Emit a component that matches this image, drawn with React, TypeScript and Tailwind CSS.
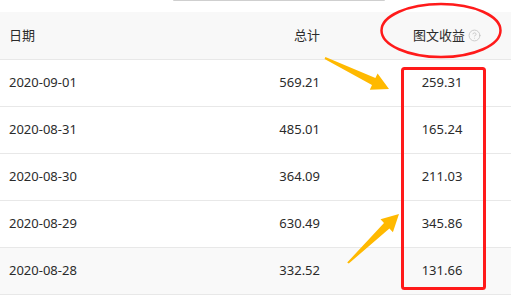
import { CircleHelp } from 'lucide-react'

const rows = [
  { date: '2020-09-01', total: '569.21', article: '259.31' },
  { date: '2020-08-31', total: '485.01', article: '165.24' },
  { date: '2020-08-30', total: '364.09', article: '211.03' },
  { date: '2020-08-29', total: '630.49', article: '345.86' },
  { date: '2020-08-28', total: '332.52', article: '131.66' },
]

const font = { fontFamily: '"Noto Sans", "Noto Sans CJK SC", sans-serif' }

function Annotations() {
  return (
    <svg className="absolute inset-0 pointer-events-none" width="511" height="303" viewBox="0 0 511 303">
      <ellipse cx="441" cy="30.5" rx="59.5" ry="26.5" fill="none" stroke="#ff1a1a" strokeWidth="2.5" />
      <rect x="402.5" y="68.5" width="82" height="220" rx="2" fill="none" stroke="#ff1a1a" strokeWidth="3" />
      <polygon
        fill="#ffb900"
        points="325.4,57.1 375.4,78.1 377.6,73.5 389,89 369.8,89.7 372,85.1 324.6,58.9"
      />
      <polygon
        fill="#ffb900"
        points="347.2,262.6 384,223 380.5,219.3 399,214 392.9,232.3 389.4,228.6 348.8,263.4"
      />
    </svg>
  )
}

export default function App() {
  return (
    <div className="relative w-[511px] h-[303px] bg-white text-[13px] text-[#2b2b2b] overflow-hidden" style={font}>
      <div className="h-[12px]">
        <div className="ml-[173px] w-[212px] h-px bg-[#cfcfcf] rounded-b" />
      </div>

      <div className="flex items-center h-[48px] bg-[#f8f8f8] border-b border-[#e8e8e8]">
        <div className="w-[180px] pl-[9px]">日期</div>
        <div className="w-[140px] text-right">总计</div>
        <div className="ml-[80px] w-[84px] pl-[13px] flex items-center gap-[3px] whitespace-nowrap">
          图文收益
          <CircleHelp className="w-[13px] h-[13px] text-[#c4c4c4]" strokeWidth={1.6} />
        </div>
      </div>

      {rows.map((r, i) => (
        <div
          key={r.date}
          className={`flex items-center h-[47px] border-b border-[#e8e8e8] ${i === rows.length - 1 ? 'bg-[#f9f9f9]' : 'bg-white'}`}
        >
          <div className="w-[180px] pl-[9px]">{r.date}</div>
          <div className="w-[140px] text-right">{r.total}</div>
          <div className="ml-[80px] w-[84px] text-center">{r.article}</div>
        </div>
      ))}

      <Annotations />
    </div>
  )
}
